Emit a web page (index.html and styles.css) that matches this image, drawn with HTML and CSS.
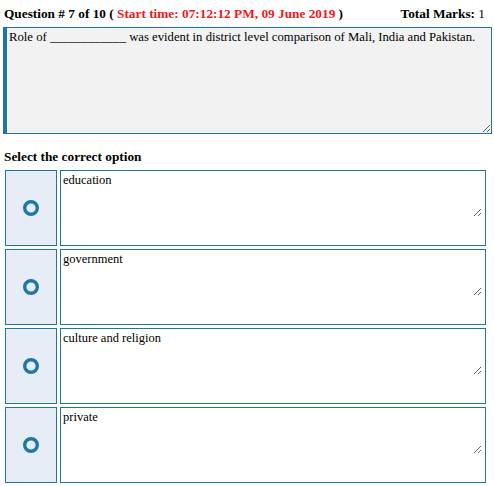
FILE: index.html
```html
<!DOCTYPE html>
<html>
<head>
<meta charset="utf-8">
<link rel="stylesheet" href="styles.css">
</head>
<body>
<div class="page">
  <div class="header">
    <div class="qnum">Question # 7 of 10 ( <span class="start">Start time: 07:12:12 PM, 09 June 2019</span> )</div>
    <div class="marks"><b>Total Marks:</b> 1</div>
  </div>
  <textarea class="question" readonly>Role of ____________ was evident in district level comparison of Mali, India and Pakistan.</textarea>
  <div class="select">Select the correct option</div>
  <div class="options">
    <div class="option">
      <div class="radio"><svg width="18" height="18" viewBox="0 0 18 18"><circle cx="9" cy="9" r="6.3" fill="none" stroke="#1f77a2" stroke-width="3.4"/></svg></div>
      <div class="answer-box"><textarea class="answer" readonly>education</textarea></div>
    </div>
    <div class="option">
      <div class="radio"><svg width="18" height="18" viewBox="0 0 18 18"><circle cx="9" cy="9" r="6.3" fill="none" stroke="#1f77a2" stroke-width="3.4"/></svg></div>
      <div class="answer-box"><textarea class="answer" readonly>government</textarea></div>
    </div>
    <div class="option">
      <div class="radio"><svg width="18" height="18" viewBox="0 0 18 18"><circle cx="9" cy="9" r="6.3" fill="none" stroke="#1f77a2" stroke-width="3.4"/></svg></div>
      <div class="answer-box"><textarea class="answer" readonly>culture and religion</textarea></div>
    </div>
    <div class="option">
      <div class="radio"><svg width="18" height="18" viewBox="0 0 18 18"><circle cx="9" cy="9" r="6.3" fill="none" stroke="#1f77a2" stroke-width="3.4"/></svg></div>
      <div class="answer-box"><textarea class="answer" readonly>private</textarea></div>
    </div>
  </div>
</div>
</body>
</html>
```

FILE: styles.css
```css
html, body {
  margin: 0;
  padding: 0;
  background: #ffffff;
}
body {
  font-family: "Liberation Serif", "Times New Roman", serif;
  color: #000;
}
.page {
  padding: 6px 0 0 4px;
}
.header {
  display: flex;
  justify-content: space-between;
  width: 481px;
  font-size: 13.3px;
  line-height: 16px;
  height: 16px;
}
.qnum {
  font-weight: bold;
}
.start {
  color: #f5161d;
}
.marks {
  font-weight: normal;
}
.question {
  display: block;
  box-sizing: border-box;
  margin: 5px 0 0 -1px;
  width: 489px;
  height: 107px;
  border: 1px solid #1f77a2;
  border-left: 4px solid #1f77a2;
  background: #f2f2f2;
  padding: 2px;
  font-family: "Liberation Serif", "Times New Roman", serif;
  font-size: 12.7px;
  line-height: 15px;
  color: #000;
  outline: none;
}
.select {
  margin-top: 15px;
  font-size: 13.3px;
  line-height: 16px;
  font-weight: bold;
}
.options {
  margin-top: 5px;
  margin-left: 1px;
  display: flex;
  flex-direction: column;
  gap: 3px;
}
.option {
  display: flex;
  gap: 3px;
  height: 76px;
}
.radio {
  box-sizing: border-box;
  width: 52px;
  height: 76px;
  border: 1px solid #1f77a2;
  background: #e6edf7;
  display: flex;
  align-items: center;
  justify-content: center;
}
.radio svg {
  display: block;
}
.answer-box {
  box-sizing: border-box;
  width: 426px;
  height: 76px;
  border: 1px solid #1f77a2;
  background: #fff;
}
.answer {
  display: block;
  box-sizing: border-box;
  margin: 0;
  width: 421px;
  height: 46px;
  border: none;
  background: transparent;
  padding: 2px;
  font-family: "Liberation Serif", "Times New Roman", serif;
  font-size: 12.5px;
  line-height: 14px;
  color: #000;
  outline: none;
}
```
